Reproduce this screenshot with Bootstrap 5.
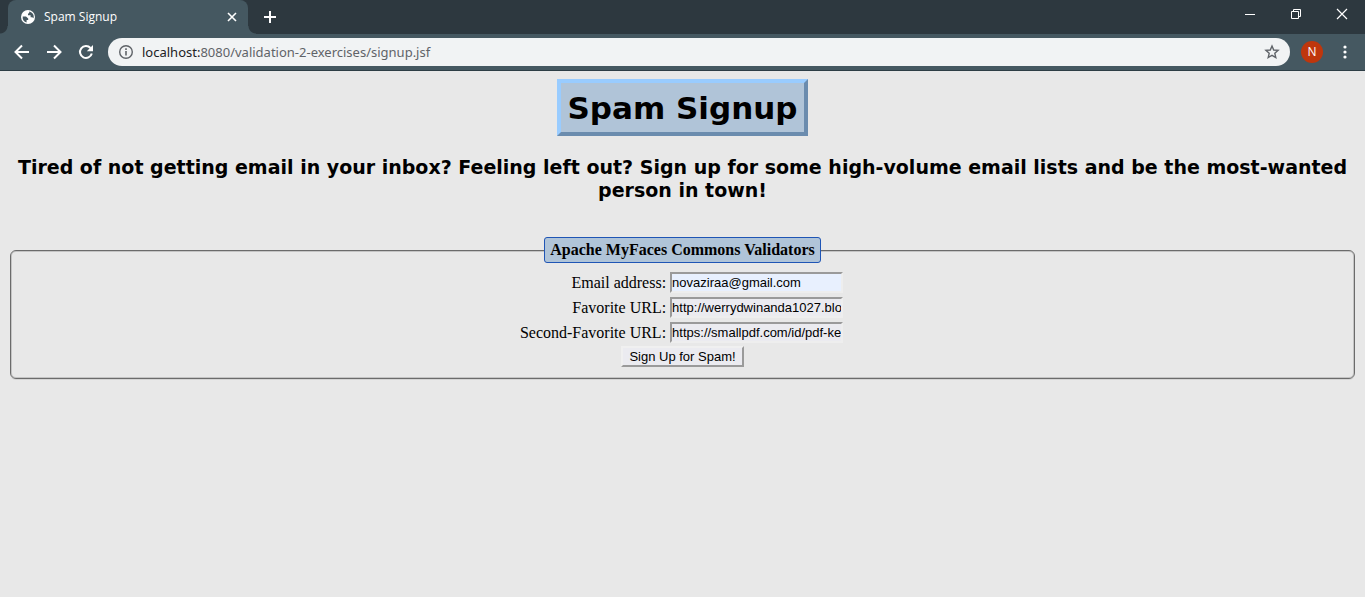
<!DOCTYPE html>
<html lang="en">
<head>
<meta charset="utf-8">
<meta name="viewport" content="width=device-width, initial-scale=1">
<title>Spam Signup</title>
<link href="https://cdn.jsdelivr.net/npm/bootstrap@5.3.0/dist/css/bootstrap.min.css" rel="stylesheet">
<style>
  body { background: #e8e8e8; color: #000; font-family: "Liberation Serif", serif; font-size: 16px; line-height: 18px; }
  svg { display: block; flex: none; }
  .chrome { font-family: "Open Sans", sans-serif; color: #fff; }
  .chrome button { background: none; border: 0; padding: 0; color: inherit; display: flex; align-items: center; justify-content: center; flex: none; }
  .tab-strip { background: #2d383f; height: 34px; }
  .browser-tab { background: #455861; width: 240px; margin-left: 8px; padding: 0 11px 0 12px; border-radius: 8px 8px 0 0; position: relative; font-size: 12px; }
  .browser-tab::before, .browser-tab::after { content: ""; position: absolute; bottom: 0; width: 8px; height: 8px; }
  .browser-tab::before { right: 100%; background: radial-gradient(circle at 0 0, #2d383f 7px, #455861 8px); }
  .browser-tab::after { left: 100%; background: radial-gradient(circle at 100% 0, #2d383f 7px, #455861 8px); }
  .chrome .new-tab { width: 44px; }
  .chrome .win-btn { width: 46px; height: 28px; }
  .toolbar { background: #455861; height: 37px; border-bottom: 1px solid #2d3d45; padding: 0 4px 0 6px; }
  .chrome .tool-btn { width: 32px; height: 28px; }
  .address { background: #f1f3f4; color: #5f6368; height: 28px; border-radius: 14px; padding: 0 10px; margin-left: 6px; font-family: "Noto Sans", sans-serif; font-size: 13px; }
  .address b { color: #202124; font-weight: 400; }
  .chrome .avatar { background: #bf360c; width: 22px; height: 22px; border-radius: 50%; margin: 0 6px 0 11px; font-size: 12px; }
  .page-title { background: #b0c4d8; border: 4px solid; border-color: #99ccff #6b8cae #6b8cae #99ccff; padding: 7px 6px 5px; font: bold 31px/37px "DejaVu Sans", sans-serif; }
  .tagline { font: bold 19px/23px "DejaVu Sans", sans-serif; margin: 20px 0 35px; }
  .signup-box { border: 1px solid #6b6b6b; border-radius: 6px; box-shadow: inset 0 0 0 1px #c4c4c4, 0 1px 0 #d4d4d4; margin: 0 2px; padding: 0 12px 11px; }
  .signup-box legend { float: none; width: auto; margin: 0 auto 9px; padding: 3px 5px; border: 1px solid #1f55b5; border-radius: 3px; background: #b0c4d8; font-size: 16px; line-height: 18px; font-weight: 700; }
  .fields { display: grid; grid-template-columns: auto 173px; gap: 4px; justify-content: center; text-align: right; padding-right: 2px; }
  .fields label { line-height: 20px; }
  .fields input, .submit-btn { font: 13px/15px "Liberation Sans", sans-serif; color: #000; }
  .fields input { min-width: 0; height: 21px; padding: 1px 0; border: 2px solid; border-color: #9a9a9a #eee #eee #9a9a9a; background: #ebebf0; }
  .fields input[type=email] { background: #e8f0fe; }
  .submit-btn { height: 21px; margin-top: 3px; padding: 0 6px; border: 2px solid; border-color: #f0f0f0 #9a9a9a #9a9a9a #f0f0f0; background: #ebebf0; }
</style>
</head>
<body>
<header class="chrome">
  <div class="tab-strip d-flex">
    <div class="browser-tab d-flex align-items-center">
      <svg width="16" height="16" viewBox="0 0 16 16"><circle cx="8" cy="8" r="7" fill="#fff"/><path d="M2.700 7.400h3.300l2.200 2.200v1.500H6.600v2.300C4 12.800 2.300 10.500 2.700 7.400zM9.200 2.500v1.500l-1.200.7v1.600h2.600v2h1.600l1.300.9c1-2.800-.8-6-4.300-6.700z" fill="#455861"/></svg>
      <span class="ms-2 flex-grow-1">Spam Signup</span>
      <button type="button" aria-label="Close tab"><svg width="10" height="10" viewBox="0 0 10 10" stroke="#fff" stroke-width="1.600"><path d="M1 1l8 8M9 1L1 9"/></svg></button>
    </div>
    <button type="button" class="new-tab" aria-label="New tab"><svg width="12" height="12" viewBox="0 0 12 12" stroke="#fff" stroke-width="2"><path d="M6 0v12M0 6h12"/></svg></button>
    <div class="d-flex ms-auto">
      <button type="button" class="win-btn" aria-label="Minimize"><svg width="10" height="10" viewBox="0 0 10 10" stroke="#fff"><path d="M0 5.500h10"/></svg></button>
      <button type="button" class="win-btn" aria-label="Restore"><svg width="10" height="10" viewBox="0 0 10 10" fill="none" stroke="#fff"><path d="M.5 2.500h7v7h-7zM2.500 2.500v-2h7v7h-2"/></svg></button>
      <button type="button" class="win-btn" aria-label="Close"><svg width="12" height="12" viewBox="0 0 12 12" stroke="#fff" stroke-width="1.200"><path d="M1 1l10 10M11 1L1 11"/></svg></button>
    </div>
  </div>
  <div class="toolbar d-flex align-items-center">
    <button type="button" class="tool-btn" aria-label="Back"><svg width="16" height="16" viewBox="0 0 16 16" fill="none" stroke="#fff" stroke-width="2"><path d="M15 8H2M8 1.500L1.500 8 8 14.500"/></svg></button>
    <button type="button" class="tool-btn" aria-label="Forward"><svg width="16" height="16" viewBox="0 0 16 16" fill="none" stroke="#fff" stroke-width="2"><path d="M1 8h13M8 1.500L14.500 8 8 14.500"/></svg></button>
    <button type="button" class="tool-btn" aria-label="Reload"><svg width="16" height="16" viewBox="0 0 16 16" fill="none" stroke="#fff" stroke-width="2"><path d="M13.800 9.500A6 6 0 1 1 12.500 4"/><path d="M15 1v6.200H8.800z" fill="#fff" stroke="none"/></svg></button>
    <div class="address d-flex align-items-center flex-grow-1">
      <svg width="16" height="16" viewBox="0 0 16 16" fill="none" stroke="#5f6368"><circle cx="8" cy="8" r="6.300" stroke-width="1.400"/><path d="M8 7v4.500M8 4.300v1.600" stroke-width="1.600"/></svg>
      <span class="ms-2 flex-grow-1"><b>localhost:</b>8080/validation-2-exercises/signup.jsf</span>
      <button type="button" aria-label="Bookmark this page"><svg width="16" height="16" viewBox="0 0 16 16" fill="none" stroke="#5f6368" stroke-width="1.400"><path d="M8 2l1.700 4 4.400.4-3.300 2.900 1 4.300L8 11.300l-3.800 2.300 1-4.300L1.900 6.400 6.300 6z"/></svg></button>
    </div>
    <button type="button" class="avatar">N</button>
    <button type="button" class="tool-btn" aria-label="Menu"><svg width="4" height="14" viewBox="0 0 4 14" fill="#fff"><circle cx="2" cy="2" r="1.600"/><circle cx="2" cy="7" r="1.600"/><circle cx="2" cy="12" r="1.600"/></svg></button>
  </div>
</header>
<main class="p-2 text-center">
  <div class="d-flex justify-content-center"><h1 class="page-title m-0">Spam Signup</h1></div>
  <h2 class="tagline">Tired of not getting email in your inbox? Feeling left out? Sign up for some high-volume email lists and be the most-wanted person in town!</h2>
  <form>
    <fieldset class="signup-box">
      <legend>Apache MyFaces Commons Validators</legend>
      <div class="fields align-items-center">
        <label for="email">Email address:</label>
        <input id="email" type="email" value="novaziraa@gmail.com">
        <label for="url1">Favorite URL:</label>
        <input id="url1" type="text" value="http://werrydwinanda1027.blogspot.com">
        <label for="url2">Second-Favorite URL:</label>
        <input id="url2" type="text" value="https://smallpdf.com/id/pdf-ke-word">
      </div>
      <div class="d-flex justify-content-center"><button type="button" class="submit-btn">Sign Up for Spam!</button></div>
    </fieldset>
  </form>
</main>
<script src="https://cdn.jsdelivr.net/npm/bootstrap@5.3.0/dist/js/bootstrap.bundle.min.js"></script>
</body>
</html>
